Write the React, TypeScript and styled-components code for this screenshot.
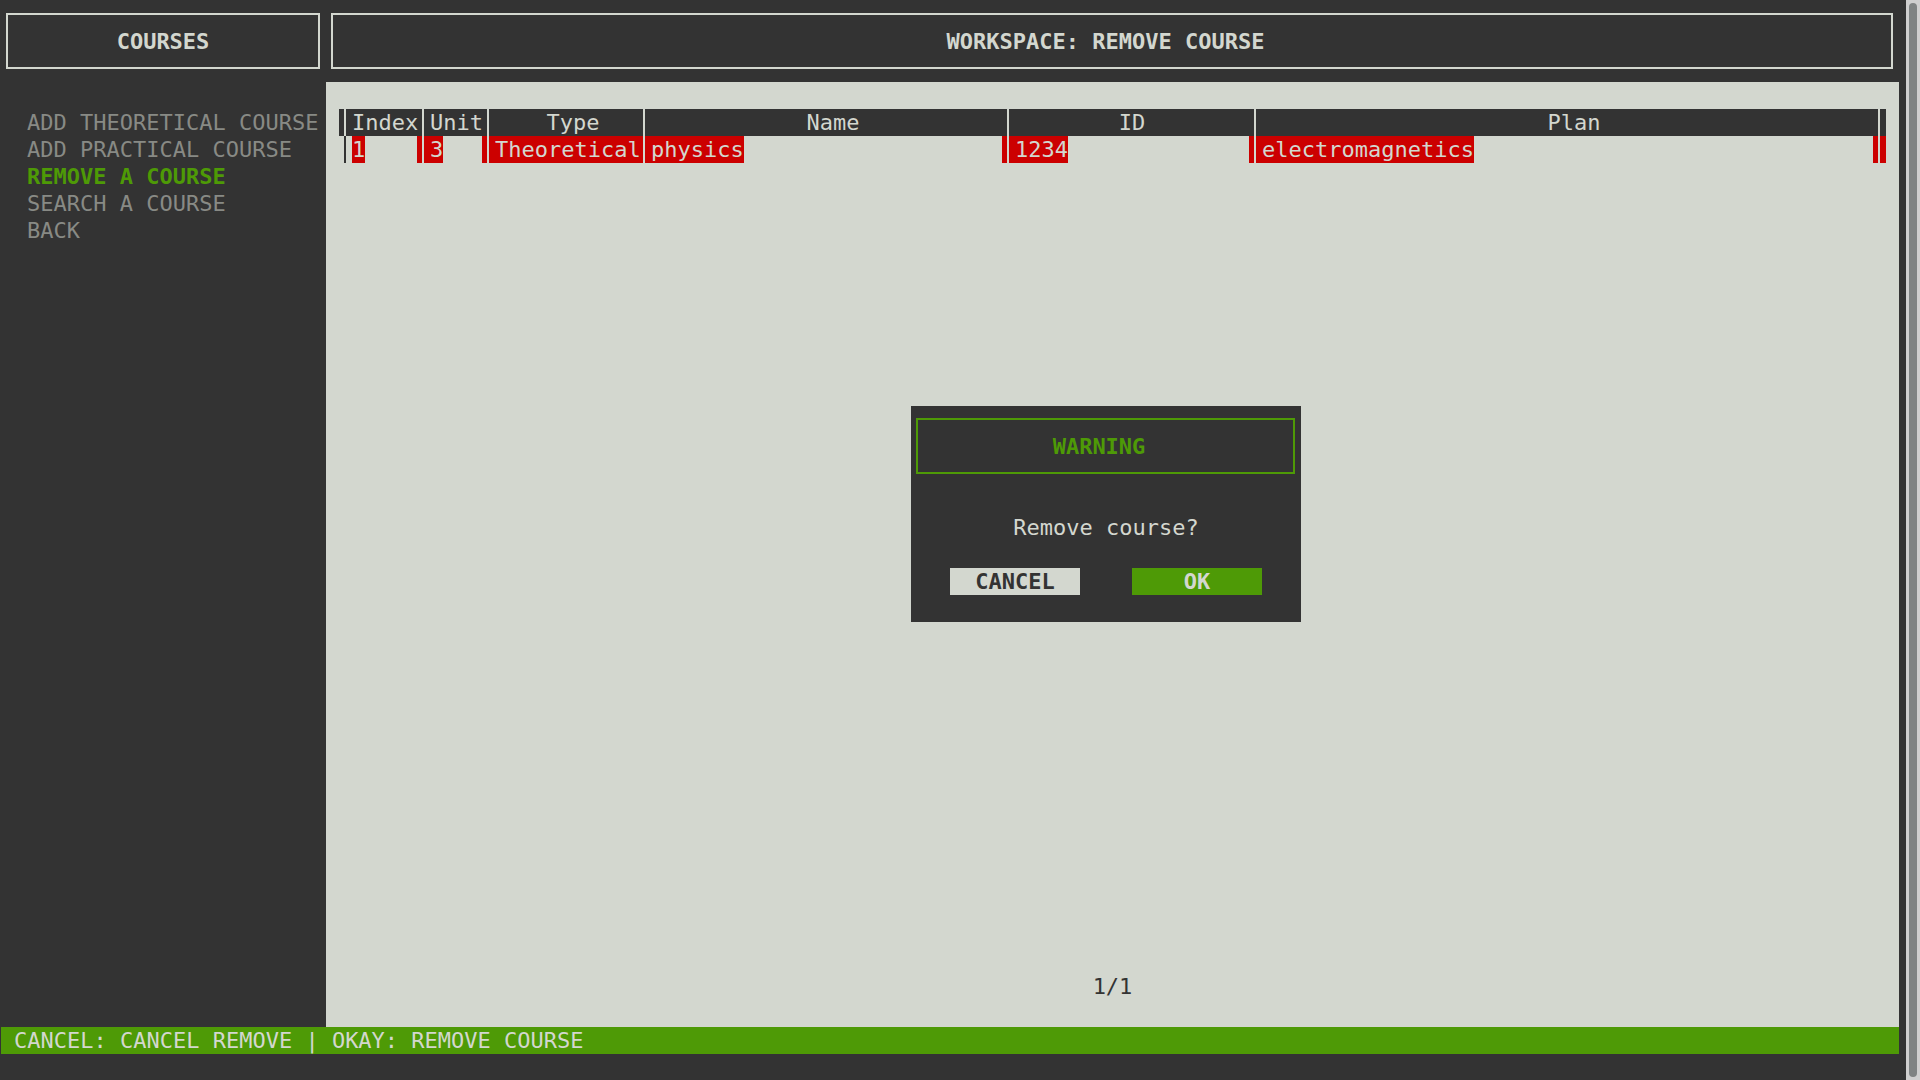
import React, { useState } from "react";
import styled, { createGlobalStyle } from "styled-components";

const c = {
  dark: "#333333",
  light: "#d3d7cf",
  green: "#4e9a06",
  red: "#cc0000",
  grey: "#888a85",
  track: "#cfcfcf",
  thumb: "#7f8383",
};

const GlobalStyle = createGlobalStyle`
  *, *::before, *::after { box-sizing: border-box; }
  body {
    margin: 0;
    background: ${c.dark};
  }
  body, button {
    font-family: "DejaVu Sans Mono", "Liberation Mono", monospace;
    font-size: 22px;
    line-height: 27px;
  }
`;

const Window = styled.div`
  display: flex;
  height: 100vh;
  color: ${c.light};
  background: ${c.dark};
`;

const Terminal = styled.div`
  flex: 1;
  min-width: 0;
  display: flex;
  flex-direction: column;
  padding: 1px 7px 26px 1px;
`;

const Panes = styled.div`
  flex: 1;
  min-height: 0;
  display: grid;
  grid-template-columns: 325px minmax(0, 1fr);
`;

const Sidebar = styled.aside`
  display: flex;
  flex-direction: column;
`;

const Main = styled.main`
  position: relative;
  display: flex;
  flex-direction: column;
`;

const TitleBox = styled.h2<{ $color?: string; $half?: boolean }>`
  margin: 12px 6px 13px 5px;
  padding: 13px ${(p) => (p.$half ? "13px" : "0")} 12px 0;
  border: 2px solid ${(p) => p.$color || c.light};
  color: ${(p) => p.$color || c.light};
  font-size: 22px;
  font-weight: 700;
  text-align: center;
  white-space: nowrap;
`;

const Menu = styled.nav`
  display: flex;
  flex-direction: column;
  align-items: flex-start;
  padding: 27px 0 0 26px;
`;

const MenuItem = styled.button<{ $active: boolean }>`
  border: 0;
  padding: 0;
  background: none;
  color: ${(p) => (p.$active ? c.green : c.grey)};
  font-weight: ${(p) => (p.$active ? 700 : 400)};
  white-space: nowrap;
  cursor: pointer;
`;

const Workspace = styled.section`
  flex: 1;
  display: flex;
  flex-direction: column;
  justify-content: space-between;
  padding: 27px 13px;
  background: ${c.light};
  color: ${c.dark};
`;

const Table = styled.table`
  width: 100%;
  table-layout: fixed;
  border-collapse: separate;
  border-spacing: 0;
  color: ${c.light};
  white-space: nowrap;
`;

const Col = styled.col<{ $width?: number }>`
  width: ${(p) => (p.$width ? `${p.$width}px` : "auto")};
`;

const HeadEdge = styled.td`
  padding: 0;
  background: ${c.dark};
`;

const HeadEnd = styled(HeadEdge)`
  border-left: 2px solid ${c.light};
`;

const Head = styled.th<{ $half?: boolean }>`
  padding: 0 5px 0 ${(p) => (p.$half ? "19px" : "6px")};
  border-left: 2px solid ${c.light};
  background: ${c.dark};
  font-weight: 400;
  text-align: center;
`;

const Edge = styled.td`
  padding: 0;
`;

const EdgeEnd = styled.td`
  padding: 0;
  border-left: 2px solid ${c.light};
  background: ${c.red};
`;

const Cell = styled.td<{ $first?: boolean }>`
  padding: 0 0 0 ${(p) => (p.$first ? "6px" : "0")};
  border-left: 2px solid ${(p) => (p.$first ? c.dark : c.light)};
  border-right: 5px solid ${c.red};
`;

const Mark = styled.span<{ $first?: boolean }>`
  display: block;
  width: fit-content;
  padding-left: ${(p) => (p.$first ? "0" : "6px")};
  background: ${c.red};
`;

const Pager = styled.div`
  text-align: center;
`;

const Overlay = styled.div`
  position: absolute;
  inset: 0;
  display: flex;
  align-items: center;
  justify-content: center;
  padding-right: 13px;
`;

const Dialog = styled.div`
  display: flex;
  flex-direction: column;
  width: 390px;
  padding-bottom: 27px;
  background: ${c.dark};
`;

const Message = styled.p`
  margin: 27px 0;
  text-align: center;
`;

const Actions = styled.div`
  display: flex;
  justify-content: space-between;
  padding: 0 39px;
`;

const Action = styled.button<{ $primary?: boolean }>`
  width: 130px;
  border: 0;
  padding: 0;
  background: ${(p) => (p.$primary ? c.green : c.light)};
  color: ${(p) => (p.$primary ? c.light : c.dark)};
  font-weight: 700;
  cursor: pointer;
`;

const Status = styled.footer`
  padding: 0 13px;
  background: ${c.green};
`;

const ScrollTrack = styled.div`
  display: flex;
  width: 14px;
  padding: 3px;
  background: ${c.track};
`;

const ScrollThumb = styled.div`
  width: 8px;
  border-radius: 4px;
  background: ${c.thumb};
`;

const menu = [
  "ADD THEORETICAL COURSE",
  "ADD PRACTICAL COURSE",
  "REMOVE A COURSE",
  "SEARCH A COURSE",
  "BACK",
];

const columns = [
  { label: "Index", width: 78 },
  { label: "Unit", width: 65 },
  { label: "Type", width: 156, half: true },
  { label: "Name", width: 364, half: true },
  { label: "ID", width: 247 },
  { label: "Plan", half: true },
];

const rows = [["1", "3", "Theoretical", "physics", "1234", "electromagnetics"]];

export default function App() {
  const [active, setActive] = useState("REMOVE A COURSE");

  return (
    <>
      <GlobalStyle />
      <Window>
        <Terminal>
          <Panes>
            <Sidebar>
              <TitleBox>COURSES</TitleBox>
              <Menu>
                {menu.map((item) => (
                  <MenuItem
                    key={item}
                    type="button"
                    $active={item === active}
                    onClick={() => setActive(item)}
                  >
                    {item}
                  </MenuItem>
                ))}
              </Menu>
            </Sidebar>
            <Main>
              <TitleBox as="h1" $half>
                WORKSPACE: REMOVE COURSE
              </TitleBox>
              <Workspace>
                <Table>
                  <colgroup>
                    <Col $width={5} />
                    {columns.map((col) => (
                      <Col key={col.label} $width={col.width} />
                    ))}
                    <Col $width={8} />
                  </colgroup>
                  <thead>
                    <tr>
                      <HeadEdge />
                      {columns.map((col) => (
                        <Head key={col.label} scope="col" $half={col.half}>
                          {col.label}
                        </Head>
                      ))}
                      <HeadEnd />
                    </tr>
                  </thead>
                  <tbody>
                    {rows.map((row) => (
                      <tr key={row[0]}>
                        <Edge />
                        {row.map((value, i) => (
                          <Cell key={columns[i].label} $first={i === 0}>
                            <Mark $first={i === 0}>{value}</Mark>
                          </Cell>
                        ))}
                        <EdgeEnd />
                      </tr>
                    ))}
                  </tbody>
                </Table>
                <Pager>1/1</Pager>
              </Workspace>
              <Overlay>
                <Dialog role="alertdialog" aria-labelledby="warning-title" aria-describedby="warning-text">
                  <TitleBox id="warning-title" $color={c.green} $half>
                    WARNING
                  </TitleBox>
                  <Message id="warning-text">Remove course?</Message>
                  <Actions>
                    <Action type="button">CANCEL</Action>
                    <Action type="button" $primary>
                      OK
                    </Action>
                  </Actions>
                </Dialog>
              </Overlay>
            </Main>
          </Panes>
          <Status>CANCEL: CANCEL REMOVE | OKAY: REMOVE COURSE</Status>
        </Terminal>
        <ScrollTrack aria-hidden="true">
          <ScrollThumb />
        </ScrollTrack>
      </Window>
    </>
  );
}
